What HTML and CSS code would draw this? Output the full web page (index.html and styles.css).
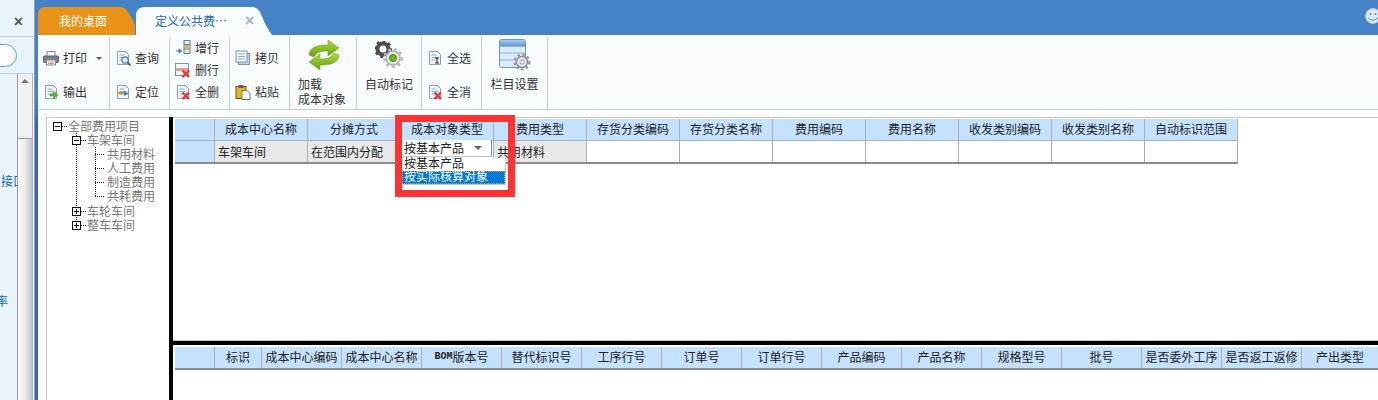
FILE: index.html
```html
<!DOCTYPE html>
<html lang="zh-CN">
<head>
<meta charset="utf-8">
<title>定义公共费用</title>
<link rel="stylesheet" href="styles.css">
</head>
<body>
<svg class="defs" width="0" height="0" aria-hidden="true">
  <defs>
    <linearGradient id="gGreen" x1="0" y1="0" x2="0" y2="1"><stop offset="0" stop-color="#b4dc3a"/><stop offset="1" stop-color="#5f9e14"/></linearGradient>
    <linearGradient id="gHead" x1="0" y1="0" x2="0" y2="1"><stop offset="0" stop-color="#a8cdf2"/><stop offset="1" stop-color="#5d9ad6"/></linearGradient>
    <symbol id="doc" viewBox="0 0 16 16"><path d="M2.500 1.500h8l3 3v10h-11z" fill="#f2f7fc" stroke="#8ea2b8"/><path d="M4.500 5h5M4.500 7.500h7M4.500 10h5" stroke="#8fb0d0"/></symbol>
    <symbol id="redx" viewBox="0 0 16 16"><path d="M7.500 8.500l6.500 6.500M14 8.500l-6.500 6.500" stroke="#e03a2e" stroke-width="2.400" fill="none"/></symbol>
  </defs>
</svg>

<aside class="side">
  <div class="side-top"><span class="close">×</span></div>
  <div class="side-search"><div class="pill"></div></div>
  <div class="side-body">
    <div class="side-list">
      <div class="link link-a">接口</div>
      <div class="link link-b">效率</div>
    </div>
    <div class="scroll">
      <div class="scroll-track"><span class="scroll-up"></span></div>
      <div class="scroll-thumb"></div>
    </div>
  </div>
</aside>
<div class="rail"></div>

<main class="main">
  <nav class="tabs">
    <div class="tab tab-home">我的桌面</div>
    <div class="tab tab-cur"><span>定义公共费⋯</span><span class="tab-x">×</span></div>
    <svg class="smile" width="16" height="16" viewBox="0 0 16 16"><circle cx="8" cy="8" r="7.500" fill="#dfeaf7" stroke="#a9c4e4"/><circle cx="5.500" cy="6" r="1" fill="#4682c6"/><circle cx="10.500" cy="6" r="1" fill="#4682c6"/><path d="M3.500 9.500c1 3.500 8 3.500 9 0" fill="none" stroke="#4682c6"/></svg>
  </nav>

  <section class="toolbar">
    <div class="group g1 rows2">
      <div class="item">
        <svg class="ico" viewBox="0 0 16 16"><rect x="4" y="1.500" width="8" height="5" fill="#fff" stroke="#7d8894"/><rect x="0.500" y="6" width="15" height="6.500" rx="1" fill="#77818c" stroke="#59636e"/><rect x="3.500" y="10" width="9" height="5" fill="#fff" stroke="#7d8894"/><path d="M5 12h6M5 13.500h6" stroke="#e08a8a"/></svg>
        <span>打印</span><span class="caret"></span>
      </div>
      <div class="item">
        <svg class="ico" viewBox="0 0 16 16"><use href="#doc"/><path d="M7 10h3.500V7.500L15 11l-4.500 3.500V12H7z" fill="#52b52a" stroke="#3c8f1c" stroke-width=".5"/></svg>
        <span>输出</span>
      </div>
    </div>
    <div class="group g2 rows2">
      <div class="item">
        <svg class="ico" viewBox="0 0 16 16"><use href="#doc"/><circle cx="10" cy="10" r="3.200" fill="#d6ecfb" stroke="#4a7fb0" stroke-width="1.200"/><path d="M12.500 12.500l3 3" stroke="#3d5f80" stroke-width="1.800"/></svg>
        <span>查询</span>
      </div>
      <div class="item">
        <svg class="ico" viewBox="0 0 16 16"><use href="#doc"/><path d="M3 9h6" stroke="#d09030" stroke-width="2"/><path d="M9 7l5 2.500-5 2.500z" fill="#3f86c9"/></svg>
        <span>定位</span>
      </div>
    </div>
    <div class="group g3 rows3">
      <div class="item">
        <svg class="ico" viewBox="0 0 16 16"><rect x="9" y="0.500" width="6" height="13" fill="#f5e9b8" stroke="#4a84bf"/><path d="M9 4.500h6M9 9h6" stroke="#4a84bf"/><rect x="10" y="5" width="4" height="4" fill="#e2b53c"/><path d="M1 11h4M4 9l3 2-3 2z" fill="#4a84bf" stroke="#4a84bf"/></svg>
        <span>增行</span>
      </div>
      <div class="item">
        <svg class="ico" viewBox="0 0 16 16"><rect x="0.500" y="1.500" width="13" height="12" fill="#f4f8fc" stroke="#7d95ad"/><rect x="1" y="6" width="12" height="3" fill="#ec9a94"/><use href="#redx"/></svg>
        <span>删行</span>
      </div>
      <div class="item">
        <svg class="ico" viewBox="0 0 16 16"><use href="#doc"/><use href="#redx"/></svg>
        <span>全删</span>
      </div>
    </div>
    <div class="group g4 rows2">
      <div class="item">
        <svg class="ico" viewBox="0 0 16 16"><rect x="3.500" y="3.500" width="11" height="11" fill="#bcd2e8" stroke="#7d95ad"/><rect x="1" y="1" width="11" height="11" fill="#f2f7fc" stroke="#7d95ad"/><path d="M3 4h7M3 6.500h7M3 9h7" stroke="#8fb0d0"/></svg>
        <span>拷贝</span>
      </div>
      <div class="item">
        <svg class="ico" viewBox="0 0 16 16"><rect x="1" y="2.500" width="10" height="12" fill="#e6b422" stroke="#70561a"/><rect x="3.500" y="1" width="5" height="3" fill="#5e5e5e"/><path d="M7 6.500h5l3 3v6H7z" fill="#fff" stroke="#70757c"/></svg>
        <span>粘贴</span>
      </div>
    </div>
    <div class="group g5 big">
      <svg class="bigico" width="32" height="32" viewBox="0 0 32 32">
        <path d="M1 16C2 8 9 6 20 6V1l11 8-11 8v-5c-7 0-11 1-14 6z" fill="url(#gGreen)" stroke="#6fa51c" stroke-width=".6"/>
        <path d="M31 16c-1 8-8 10-19 10v5L1 23l11-8v5c7 0 11-1 14-6z" fill="url(#gGreen)" stroke="#6fa51c" stroke-width=".6"/>
      </svg>
      <span class="biglabel">加载<br>成本对象</span>
    </div>
    <div class="group g6 big centered">
      <svg class="bigico" width="28" height="28" viewBox="0 0 28 28">
        <circle cx="8" cy="8" r="5.500" fill="#fff" stroke="#4d4d4d" stroke-width="4"/>
        <circle cx="8" cy="8" r="7.800" fill="none" stroke="#4d4d4d" stroke-width="2.500" stroke-dasharray="3 3"/>
        <circle cx="18" cy="17" r="7" fill="#e4e4e4" stroke="#b0b0b0" stroke-width="1.500"/>
        <circle cx="18" cy="17" r="8.800" fill="none" stroke="#b4b4b4" stroke-width="2.200" stroke-dasharray="3 3"/>
        <circle cx="18" cy="17" r="3.500" fill="#6eb41e" stroke="#4e8a12"/>
      </svg>
      <span class="biglabel">自动标记</span>
    </div>
    <div class="group g7 rows2">
      <div class="item">
        <svg class="ico" viewBox="0 0 16 16"><use href="#doc"/><path d="M8 8h4M10 8v5M8 13h4" stroke="#222" fill="none"/></svg>
        <span>全选</span>
      </div>
      <div class="item">
        <svg class="ico" viewBox="0 0 16 16"><use href="#doc"/><use href="#redx"/></svg>
        <span>全消</span>
      </div>
    </div>
    <div class="group g8 big centered">
      <svg class="bigico" width="32" height="32" viewBox="0 0 32 32">
        <rect x="0.500" y="0.500" width="26" height="28" rx="2" fill="#dcebfa" stroke="#6c94bd"/>
        <rect x="1" y="1" width="25" height="6" fill="url(#gHead)"/>
        <path d="M1 7.500h25M1 14h25M1 21h25" stroke="#8eb0d2"/>
        <circle cx="23" cy="23" r="5.500" fill="#eceff2" stroke="#8a8f96" stroke-width="1.500"/>
        <circle cx="23" cy="23" r="7.400" fill="none" stroke="#8a8f96" stroke-width="2" stroke-dasharray="2.500 2.500"/>
        <circle cx="23" cy="23" r="2.200" fill="#fff" stroke="#8a8f96"/>
      </svg>
      <span class="biglabel">栏目设置</span>
    </div>
  </section>

  <section class="work">
    <div class="tree">
      <svg class="tree-lines" width="70" height="112" viewBox="0 0 70 112">
        <path d="M29.500 15V107M48.500 29V78M15 8.500h5M34 22.500h5M34 93.500h5M34 107.500h5M48 36.500h10M48 50.500h10M48 64.500h10M48 78.500h10" stroke="#222" stroke-dasharray="1 1" fill="none"/>
      </svg>
      <div class="node l0"><span class="box minus"></span>全部费用项目</div>
      <div class="node l1"><span class="box minus"></span>车架车间</div>
      <div class="node l2">共用材料</div>
      <div class="node l2">人工费用</div>
      <div class="node l2">制造费用</div>
      <div class="node l2">共耗费用</div>
      <div class="node l1 gap"><span class="box plus"></span>车轮车间</div>
      <div class="node l1"><span class="box plus"></span>整车车间</div>
    </div>
    <div class="vsplit"></div>
    <div class="panels">
      <div class="panel-top">
        <div class="table-wrap">
          <div class="grid grid-top">
            <div class="hd"></div><div class="hd">成本中心名称</div><div class="hd">分摊方式</div><div class="hd">成本对象类型</div><div class="hd">费用类型</div><div class="hd">存货分类编码</div><div class="hd">存货分类名称</div><div class="hd">费用编码</div><div class="hd">费用名称</div><div class="hd">收发类别编码</div><div class="hd">收发类别名称</div><div class="hd">自动标识范围</div>
            <div class="hd"></div><div class="cd gray">车架车间</div><div class="cd gray">在范围内分配</div><div class="cd"></div><div class="cd gray">共用材料</div><div class="cd"></div><div class="cd"></div><div class="cd"></div><div class="cd"></div><div class="cd"></div><div class="cd"></div><div class="cd"></div>
          </div>
          <div class="select">按基本产品<span class="select-caret"></span></div>
          <ul class="options">
            <li>按基本产品</li>
            <li class="active">按实际核算对象</li>
          </ul>
          <div class="mark"></div>
        </div>
      </div>
      <div class="hsplit"></div>
      <div class="panel-bottom">
        <div class="grid grid-bottom">
          <div class="hd"></div><div class="hd">标识</div><div class="hd">成本中心编码</div><div class="hd">成本中心名称</div><div class="hd"><span class="latin">BOM</span>版本号</div><div class="hd">替代标识号</div><div class="hd">工序行号</div><div class="hd">订单号</div><div class="hd">订单行号</div><div class="hd">产品编码</div><div class="hd">产品名称</div><div class="hd">规格型号</div><div class="hd">批号</div><div class="hd">是否委外工序</div><div class="hd">是否返工返修</div><div class="hd">产出类型</div>
        </div>
      </div>
    </div>
  </section>
</main>
</body>
</html>
```

FILE: styles.css
```css
* { box-sizing: border-box; }
html, body { margin: 0; padding: 0; }
body {
  width: 1378px;
  height: 400px;
  overflow: hidden;
  display: flex;
  background: #fff;
  font: 12px/14px "Noto Sans CJK SC", "Liberation Sans", sans-serif;
  color: #222;
}
.defs { position: absolute; }

/* left sidebar */
.side {
  width: 35px;
  flex: none;
  display: flex;
  flex-direction: column;
  background: #e8f3fb;
  border-right: 1px solid #8fa2b8;
  overflow: hidden;
}
.side-top {
  height: 37px;
  border-bottom: 1px solid #c3d2df;
  display: flex;
  justify-content: flex-end;
  padding: 13px 11px 0 0;
  flex: none;
}
.close { font: bold 16px/18px "Liberation Sans", sans-serif; color: #555; }
.side-search {
  height: 37px;
  flex: none;
  border-bottom: 1px solid #c3d2df;
  padding-top: 7px;
}
.pill {
  width: 38px;
  height: 23px;
  margin-left: -21px;
  background: #fff;
  border: 1px solid #4fa8ec;
  border-radius: 12px;
}
.side-body { flex: 1; display: flex; min-height: 0; }
.side-list { width: 17px; flex: none; overflow: hidden; color: #1568a6; font-size: 12px; }
.link { white-space: nowrap; }
.link-a { margin: 100px 0 0 1px; }
.link-b { margin: 106px 0 0 -16px; }
.scroll {
  width: 16px;
  flex: none;
  display: flex;
  flex-direction: column;
  border-left: 1px solid #9a9a9a;
  border-right: 1px solid #b5b8bc;
}
.scroll-track { height: 64px; background: #f1f1f1; display: flex; justify-content: center; padding-top: 5px; }
.scroll-up { width: 0; height: 0; border: 4px solid transparent; border-top: 0; border-bottom: 4px solid #777; }
.scroll-thumb { flex: 1; background: linear-gradient(90deg, #fbfbfb, #ececec 50%, #c4c6ca); border-top: 1px solid #9a9a9a; }

.rail { width: 3px; flex: none; background: linear-gradient(#4682c6 100px, #2d68b8 125px); }

/* main */
.main { flex: 1; min-width: 0; display: flex; flex-direction: column; }
.tabs {
  height: 35px;
  flex: none;
  background: #4682c6;
  display: flex;
  align-items: flex-end;
  position: relative;
  overflow: hidden;
}
.tab { height: 28px; display: flex; align-items: center; font-size: 12px; }
.tab-home {
  width: 97px;
  margin-right: 1px;
  padding-left: 21px;
  background: #e89217;
  color: #fff;
  clip-path: path("M0 28V7Q0 0 8 0H82Q87 0 90 5Q95 12 97 18V28Z");
}
.tab-cur {
  width: 136px;
  padding-left: 19px;
  background: #f8fcff;
  color: #2a6cb5;
  clip-path: path("M0 28V7Q1 0 9 0H116Q122 0 125 7Q130 20 136 28Z");
}
.tab-x { margin-left: 18px; color: #a9b6c2; font: bold 16px/14px "Liberation Sans", sans-serif; }
.smile { position: absolute; right: -3px; top: 8px; }

/* toolbar */
.toolbar {
  height: 75px;
  flex: none;
  display: flex;
  background: #f8fcff;
  border-bottom: 1px solid #c3d0de;
  color: #333;
}
.group { border-right: 1px solid #c8cdd2; margin-top: 2px; flex: none; }
.g1 { width: 72px; } .g2 { width: 60px; } .g3 { width: 60px; } .g4 { width: 60px; }
.g5 { width: 67px; } .g6 { width: 65px; } .g7 { width: 60px; } .g8 { width: 66px; }
.rows2 { display: grid; grid-template-rows: 34px 34px; padding-top: 4px; }
.rows3 { display: grid; grid-template-rows: 22px 22px 22px; }
.item { display: flex; align-items: center; padding-left: 5px; gap: 4px; }
.ico { width: 16px; height: 16px; flex: none; }
.caret { width: 0; height: 0; margin-left: 5px; border: 3px solid transparent; border-top: 3px solid #555; border-bottom: 0; }
.big { display: flex; flex-direction: column; padding: 2px 0 0 8px; }
.big .bigico { margin-left: 10px; flex: none; }
.biglabel { margin-top: 5px; line-height: 15px; }
.centered { align-items: center; padding-left: 0; }
.centered .bigico { margin-left: 0; height: 32px; }
.centered .biglabel { margin-top: 5px; }
.g6 .bigico { margin-top: 2px; height: 28px; width: 28px; }
.g6 .biglabel { margin-top: 7px; }

/* work */
.work { flex: 1; min-height: 0; display: flex; padding: 7px 0 0 8px; }
.tree {
  width: 123px;
  flex: none;
  position: relative;
  border-left: 1px solid #c4c8cc;
  border-top: 1px solid #c4c8cc;
  color: #777;
}
.tree-lines { position: absolute; left: 0; top: 0; }
.node { height: 14px; display: flex; align-items: center; gap: 6px; white-space: nowrap; position: relative; }
.node.gap { margin-top: 1px; }
.l0 { padding-left: 6px; margin-top: 1px; }
.l1 { padding-left: 25px; }
.l2 { padding-left: 60px; }
.box {
  width: 9px;
  height: 9px;
  flex: none;
  border: 1px solid #111;
  background: #fff;
  position: relative;
}
.box::before { content: ""; position: absolute; left: 1px; right: 1px; top: 3px; height: 1px; background: #111; }
.plus::after { content: ""; position: absolute; top: 1px; bottom: 1px; left: 3px; width: 1px; background: #111; }
.vsplit { width: 4px; flex: none; background: #000; }

.panels { flex: 1; min-width: 0; display: flex; flex-direction: column; }
.panel-top { height: 223px; flex: none; border-top: 1px solid #c4c8cc; padding: 1px 0 0 2px; }
.hsplit { height: 5px; flex: none; background: #000; border-top: 1px solid #c4c8cc; }
.panel-bottom { flex: 1; padding: 2px 0 0 2px; overflow: hidden; }

.table-wrap { position: relative; width: max-content; }
.grid { display: grid; column-gap: 1px; row-gap: 1px; background: #aab0b6; border-bottom: 2px solid #8c8c8c; }
.grid-top { grid-template-columns: 39px repeat(11, 92px); grid-auto-rows: 21px; padding-right: 1px; }
.grid-bottom { grid-template-columns: 39px 46px repeat(13, 79px) 76px; grid-auto-rows: 21px; }
.hd { background: #c4e1fe; display: flex; align-items: center; justify-content: center; white-space: nowrap; overflow: hidden; color: #222; padding-bottom: 1px; }
.cd { background: #fff; display: flex; align-items: center; padding-left: 3px; white-space: nowrap; overflow: hidden; }
.gray { background: #e8e8e8; }
.latin { font: bold 10px/14px "Liberation Mono", monospace; }

/* open drop-down on the grid */
.select {
  position: absolute;
  left: 227px;
  top: 21px;
  width: 90px;
  height: 17px;
  background: #fff;
  border-right: 1px solid #6f8fb0;
  border-bottom: 1px solid #c4c8cc;
  padding-left: 2px;
  display: flex;
  align-items: center;
}
.select-caret { position: absolute; right: 9px; top: 6px; width: 0; height: 0; border: 4px solid transparent; border-top: 4px solid #666; border-bottom: 0; }
.options {
  position: absolute;
  left: 227px;
  top: 39px;
  width: 104px;
  margin: 0;
  padding: 0;
  list-style: none;
  background: #fff;
  border-right: 1px solid #c4c8cc;
  border-bottom: 1px solid #c4c8cc;
}
.options li { height: 13px; line-height: 10px; padding-left: 2px; white-space: nowrap; }
.options .active { background: #0078d7; color: #fff; outline: 1px dotted #e89a40; outline-offset: -1px; }
.mark {
  position: absolute;
  left: 220px;
  top: -4px;
  width: 120px;
  height: 82px;
  border: 7px solid #ff3333;
}
```
